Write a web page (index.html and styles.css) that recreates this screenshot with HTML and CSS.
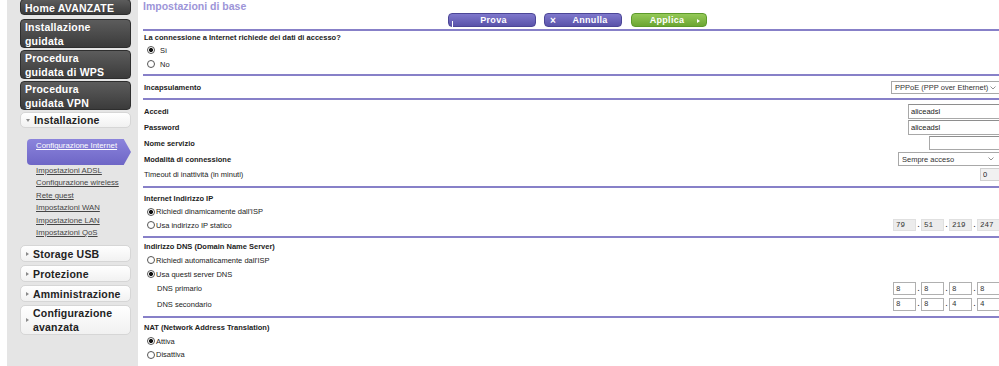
FILE: index.html
```html
<!DOCTYPE html>
<html lang="it">

<head>
    <meta charset="UTF-8">
    <title>Impostazioni di base</title>
    <link rel="stylesheet" href="styles.css">
</head>

<body>
    <div id="page">
        <nav id="sidebar">
            <a class="navbtn home" href="#">Home AVANZATE</a>
            <a class="navbtn" href="#">Installazione<br>guidata</a>
            <a class="navbtn" href="#">Procedura<br>guidata di WPS</a>
            <a class="navbtn" href="#">Procedura<br>guidata VPN</a>

            <div class="tab open"><span class="tri down"></span>Installazione</div>
            <div class="submenu">
                <a class="current" href="#">Configurazione Internet</a>
                <a href="#">Impostazioni ADSL</a>
                <a href="#">Configurazione wireless</a>
                <a href="#">Rete guest</a>
                <a href="#">Impostazioni WAN</a>
                <a href="#">Impostazione LAN</a>
                <a href="#">Impostazioni QoS</a>
            </div>

            <div class="tab"><span class="tri"></span>Storage USB</div>
            <div class="tab"><span class="tri"></span>Protezione</div>
            <div class="tab"><span class="tri"></span>Amministrazione</div>
            <div class="tab double"><span class="tri"></span><span>Configurazione<br>avanzata</span></div>
        </nav>

        <main id="content">
            <div class="top">
                <h1>Impostazioni di base</h1>
                <div class="buttons">
                    <button class="btn prova"><span class="caret"></span>Prova</button>
                    <button class="btn annulla"><span class="x">&times;</span>Annulla</button>
                    <button class="btn applica">Applica<span class="go"></span></button>
                </div>
            </div>

            <section class="sec1">
                <div class="row h12"><b>La connessione a Internet richiede dei dati di accesso?</b></div>
                <label class="row h14 wide"><input type="radio" class="radio" name="acc" checked>Sì</label>
                <label class="row h14 wide"><input type="radio" class="radio" name="acc">No</label>
            </section>

            <section class="sec2">
                <div class="row h15">
                    <b>Incapsulamento</b>
                    <div class="select pppoe"><span>PPPoE (PPP over Ethernet)</span>
                        <svg width="6" height="4" viewBox="0 0 6 4"><polyline points="0.5,0.5 3,3 5.5,0.5" fill="none" stroke="#777" stroke-width="0.8"/></svg>
                    </div>
                </div>
            </section>

            <section class="sec3">
                <div class="row h16"><b>Accedi</b><input class="text user" type="text" value="aliceadsl"></div>
                <div class="row h16"><b>Password</b><input class="text user" type="text" value="aliceadsl"></div>
                <div class="row h16"><b>Nome servizio</b><input class="text service" type="text" value=""></div>
                <div class="row h16">
                    <b>Modalità di connessione</b>
                    <div class="select mode"><span>Sempre acceso</span>
                        <svg width="6" height="4" viewBox="0 0 6 4"><polyline points="0.5,0.5 3,3 5.5,0.5" fill="none" stroke="#777" stroke-width="0.8"/></svg>
                    </div>
                </div>
                <div class="row h15"><span>Timeout di inattività (in minuti)</span><input class="text timeout" type="text" value="0"></div>
            </section>

            <section class="sec4">
                <div class="row h14"><b>Internet Indirizzo IP</b></div>
                <label class="row h13"><input type="radio" class="radio" name="ip" checked>Richiedi dinamicamente dall'ISP</label>
                <div class="row h14">
                    <label class="opt"><input type="radio" class="radio" name="ip">Usa indirizzo IP statico</label>
                    <div class="ip fixed">
                        <input type="text" value="79"><span class="dot">.</span><input type="text" value="51"><span class="dot">.</span><input type="text" value="219"><span class="dot">.</span><input type="text" value="247">
                    </div>
                </div>
            </section>

            <section class="sec5">
                <div class="row h14"><b>Indirizzo DNS (Domain Name Server)</b></div>
                <label class="row h14"><input type="radio" class="radio" name="dns">Richiedi automaticamente dall'ISP</label>
                <label class="row h14"><input type="radio" class="radio" name="dns" checked>Usa questi server DNS</label>
                <div class="row h15">
                    <span class="indent">DNS primario</span>
                    <div class="ip">
                        <input type="text" value="8"><span class="dot">.</span><input type="text" value="8"><span class="dot">.</span><input type="text" value="8"><span class="dot">.</span><input type="text" value="8">
                    </div>
                </div>
                <div class="row h16">
                    <span class="indent">DNS secondario</span>
                    <div class="ip">
                        <input type="text" value="8"><span class="dot">.</span><input type="text" value="8"><span class="dot">.</span><input type="text" value="4"><span class="dot">.</span><input type="text" value="4">
                    </div>
                </div>
            </section>

            <section class="sec6">
                <div class="row h14"><b>NAT (Network Address Translation)</b></div>
                <label class="row h14"><input type="radio" class="radio" name="nat" checked>Attiva</label>
                <label class="row h13"><input type="radio" class="radio" name="nat">Disattiva</label>
            </section>
        </main>
    </div>
</body>

</html>
```

FILE: styles.css
```css
* {
    margin: 0;
    padding: 0;
    box-sizing: border-box;
}

html,
body {
    height: 366px;
    overflow: hidden;
    background-color: #fff;
    font-family: 'Liberation Sans', Arial, sans-serif;
    color: #222;
}

#page {
    display: flex;
    height: 100%;
}

/* sidebar */

#sidebar {
    display: flex;
    flex-direction: column;
    flex-shrink: 0;
    width: 131px;
    margin-left: 7px;
    padding: 0 7px 0 13px;
    background-color: #e5e5e5;
}

.navbtn {
    display: block;
    height: 29px;
    margin-top: 2px;
    padding: 0 0 0 4px;
    border: 1px solid #2e2e2e;
    border-radius: 4px;
    background: linear-gradient(#5c5c5c, #3b3b3b);
    color: #fff;
    font-size: 10.5px;
    font-weight: bold;
    line-height: 14px;
    text-decoration: none;
    letter-spacing: 0.2px;
}

.navbtn.home {
    height: 16px;
    margin-top: -1px;
    margin-bottom: 2px;
    padding-top: 1px;
}

.tab {
    display: flex;
    align-items: center;
    height: 17px;
    margin-top: 3px;
    padding-left: 5px;
    border: 1px solid #d6d6d6;
    border-radius: 5px;
    background: linear-gradient(#fff, #f1f1f1);
    font-size: 10.5px;
    font-weight: bold;
    letter-spacing: 0.2px;
    color: #222;
}

.tab.open {
    height: 16px;
    margin-top: 2px;
}

.tab.double {
    height: 30px;
    line-height: 14px;
}

.tri {
    width: 0;
    height: 0;
    margin-right: 4px;
    border-left: 3px solid #8a8a8a;
    border-top: 2.5px solid transparent;
    border-bottom: 2.5px solid transparent;
}

.tri.down {
    border-top: 3px solid #8a8a8a;
    border-left: 2.5px solid transparent;
    border-right: 2.5px solid transparent;
    border-bottom: 0;
}

.submenu {
    display: flex;
    flex-direction: column;
    padding: 11px 0 3px 0;
}

.submenu a {
    display: block;
    height: 12.4px;
    padding-left: 16px;
    font-size: 7.8px;
    line-height: 12.4px;
    color: #454545;
}

.submenu a.current {
    height: 26px;
    margin: 0 0 0 7px;
    padding: 2px 0 0 9px;
    line-height: 10px;
    border-radius: 4px 0 0 4px;
    background: linear-gradient(#8b84dc, #6e66c6);
    color: #fff;
    clip-path: polygon(0 0, 93% 0, 100% 50%, 93% 100%, 0 100%);
}

/* content */

#content {
    width: 860px;
    margin-left: 5px;
    flex-shrink: 0;
}

.top {
    height: 29px;
}

h1 {
    height: 12px;
    font-size: 10.5px;
    line-height: 13px;
    color: #9d95d8;
}

.buttons {
    display: flex;
    justify-content: center;
    padding-left: 9px;
    margin-top: 1px;
}

.btn {
    position: relative;
    height: 14px;
    border: 1px solid #4c4697;
    border-radius: 4px;
    background: linear-gradient(#7f78cc, #5a53aa);
    color: #fff;
    font-family: 'Liberation Sans', Arial, sans-serif;
    font-size: 9px;
    font-weight: bold;
    letter-spacing: 0.3px;
}

.prova {
    width: 88px;
    margin-right: 8px;
    padding-left: 3px;
}

.caret {
    position: absolute;
    left: 3px;
    top: 7px;
    width: 1px;
    height: 7px;
    background-color: #fff;
}

.annulla {
    width: 78px;
    margin-right: 9px;
    padding-left: 14px;
}

.x {
    position: absolute;
    left: 5px;
    top: 0;
    font-size: 10px;
    line-height: 13px;
}

.applica {
    width: 76px;
    padding-right: 4px;
    border-color: #5c9a2b;
    background: linear-gradient(#94c957, #6ca633);
}

.go {
    position: absolute;
    right: 6px;
    top: 4.5px;
    border-left: 3px solid #fff;
    border-top: 2px solid transparent;
    border-bottom: 2px solid transparent;
}

section {
    border-top: 2px solid #8780c8;
    font-size: 7.5px;
}

.sec1 {
    padding-bottom: 3px;
}

.sec2 {
    padding: 4px 0 3px 0;
}

.sec3 {
    padding: 3px 0 4px 0;
}

.sec4 {
    padding: 3px 0 4px 0;
}

.sec5 {
    padding: 1px 0 4px 0;
}

.sec6 {
    padding-top: 2px;
}

.row {
    display: flex;
    align-items: center;
    justify-content: space-between;
    padding-left: 1px;
}

label.row {
    justify-content: flex-start;
}

.h12 { height: 12px; }
.h13 { height: 13px; }
.h14 { height: 14px; }
.h15 { height: 15px; }
.h16 { height: 16px; }

.opt {
    display: flex;
    align-items: center;
}

.indent {
    padding-left: 13px;
}

.radio {
    appearance: none;
    width: 8px;
    height: 8px;
    margin: 0 1px 0 3px;
    border: 1px solid #555;
    border-radius: 50%;
    background: #fff;
}

.radio:checked {
    background: radial-gradient(circle, #111 0 1.8px, #fff 2.3px);
}

.wide .radio {
    margin-right: 5px;
}

.select {
    display: flex;
    align-items: center;
    justify-content: space-between;
    height: 13px;
    padding: 0 6px 0 3px;
    border: 1px solid #a8a8a8;
    background-color: #fff;
    font-size: 7.5px;
    color: #333;
}

.pppoe {
    width: 112px;
}

.mode {
    width: 105px;
    height: 14px;
    padding-right: 8px;
}

.text {
    height: 15px;
    padding: 0 2px;
    border: 1px solid #a8a8a8;
    border-top-color: #8e8e8e;
    font-family: 'Liberation Sans', Arial, sans-serif;
    font-size: 7.5px;
    color: #222;
    outline: none;
}

.user {
    width: 95px;
}

.service {
    width: 74px;
    height: 14px;
}

.timeout {
    width: 23px;
    height: 13px;
    background-color: #f1f1f1;
    border-color: #d0d0d0;
}

.ip {
    display: flex;
    align-items: center;
    margin-right: 3px;
}

.ip input {
    width: 23px;
    height: 13px;
    padding: 0 2px;
    border: 1px solid #b0b0b0;
    background-color: #fff;
    font-family: 'Liberation Mono', monospace;
    font-size: 7.5px;
    color: #333;
    outline: none;
}

.ip.fixed input {
    height: 12px;
    border-color: #e0e0e0;
    background-color: #ececec;
}

.dot {
    width: 5px;
    font-family: 'Liberation Mono', monospace;
    font-size: 7.5px;
    text-align: center;
}
```
